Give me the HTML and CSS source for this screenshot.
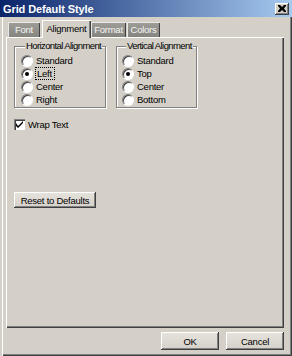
FILE: index.html
```html
<!DOCTYPE html>
<html lang="en">
<head>
  <meta charset="UTF-8">
  <title>Grid Default Style</title>
  <link rel="stylesheet" href="styles.css">
</head>
<body>

<div class="window">
  <div class="titlebar">
    <span class="title">Grid Default Style</span>
    <span class="close">
      <svg width="8" height="7" viewBox="0 0 8 7">
        <path d="M0 0h2l2 2 2-2h2v1l-2 2.5 2 2.5v1h-2l-2-2-2 2h-2v-1l2-2.5-2-2.5z" fill="#000"/>
      </svg>
    </span>
  </div>

  <div class="client">
    <div class="tabs">
      <span class="tab tab-font">Font</span>
      <span class="tab active">Alignment</span>
      <span class="tab tab-format">Format</span>
      <span class="tab tab-colors">Colors</span>
    </div>

    <div class="panel">
      <div class="groups">
        <fieldset class="group horiz">
          <legend>Horizontal Alignment</legend>
          <label class="opt"><span class="radio"></span><span>Standard</span></label>
          <label class="opt"><span class="radio checked"></span><span class="focus">Left</span></label>
          <label class="opt"><span class="radio"></span><span>Center</span></label>
          <label class="opt"><span class="radio"></span><span>Right</span></label>
        </fieldset>
        <fieldset class="group vert">
          <legend>Vertical Alignment</legend>
          <label class="opt"><span class="radio"></span><span>Standard</span></label>
          <label class="opt"><span class="radio checked"></span><span>Top</span></label>
          <label class="opt"><span class="radio"></span><span>Center</span></label>
          <label class="opt"><span class="radio"></span><span>Bottom</span></label>
        </fieldset>
      </div>

      <label class="check">
        <span class="box">
          <svg width="7" height="7" viewBox="0 0 7 7">
            <path d="M0 2v3l2 2 5-5v-2l-5 5z" fill="#000"/>
          </svg>
        </span>
        <span>Wrap Text</span>
      </label>

      <button class="btn reset" type="button">Reset to Defaults</button>
    </div>

    <div class="actions">
      <button class="btn" type="button">OK</button>
      <button class="btn" type="button">Cancel</button>
    </div>
  </div>
</div>

</body>
</html>
```

FILE: styles.css
```css
body {
  margin: 0;
  font-family: "Liberation Sans", Arial, sans-serif;
  font-size: 9.5px;
  letter-spacing: -0.25px;
  color: #000;
  background-color: #d4d0c8;
}
.window {
  width: 292px;
  height: 356px;
  display: flex;
  flex-direction: column;
  background-color: #d4d0c8;
}
.titlebar {
  height: 17px;
  display: flex;
  align-items: center;
  justify-content: space-between;
  padding: 0 3px 0 3px;
  background: linear-gradient(to right, #0a246a, #a6caf0);
}
.title {
  color: #fff;
  font-weight: bold;
  font-size: 11px;
  letter-spacing: -0.1px;
}
.close {
  width: 14px;
  height: 12px;
  display: flex;
  align-items: center;
  justify-content: center;
  background-color: #d4d0c8;
  box-shadow: inset -1px -1px #404040, inset 1px 1px #fff, inset -2px -2px #808080;
}
.client {
  flex: 1;
  display: flex;
  flex-direction: column;
  padding: 3px 8px 0 6px;
  box-shadow: inset 2px 0 #d4d0c8, inset 3px 0 #fff,
              inset -1px -1px #404040, inset -2px -2px #808080;
}
.tabs {
  display: flex;
  align-items: flex-end;
  height: 17px;
  padding-left: 2px;
}
.tab {
  height: 15px;
  line-height: 15px;
  text-align: center;
  margin-right: 1px;
  color: #f4f4f4;
  background: linear-gradient(#a09e98, #86847f);
  box-shadow: inset 1px 1px #e8e8e8, inset -1px 0 #404040;
}
.tab-font {
  width: 32px;
}
.tab-format {
  width: 35px;
}
.tab-colors {
  width: 33px;
}
.tab.active {
  width: 49px;
  height: 18px;
  line-height: 17px;
  margin: 0 0 -1px 1px;
  color: #000;
  background: #d4d0c8;
  box-shadow: inset 1px 1px #fff, inset -1px 0 #404040, inset -2px 0 #808080;
  position: relative;
}
.panel {
  height: 288px;
  padding: 3px 8px 0 8px;
  box-shadow: inset 1px 1px #fff, inset -1px -1px #404040, inset -2px -2px #808080;
}
.groups {
  display: flex;
  gap: 10px;
}
.group {
  margin: 0;
  padding: 2px 0 1px 6px;
  border: 1px solid #808080;
  box-shadow: inset 1px 1px #fff, 1px 1px #fff;
  min-width: 0;
}
.group legend {
  padding: 0 1px;
  margin-left: 4px;
  line-height: 12px;
  white-space: nowrap;
  letter-spacing: -0.6px;
  background: #d4d0c8;
}
.horiz {
  width: 84px;
}
.vert {
  width: 74px;
  padding-left: 5px;
}
.opt {
  display: flex;
  align-items: center;
  height: 13px;
  gap: 3px;
}
.radio {
  width: 10px;
  height: 10px;
  border-radius: 50%;
  background: #fff;
  border: 1px solid;
  border-color: #808080 #fff #fff #808080;
  box-shadow: inset 1px 1px #404040;
  display: flex;
  align-items: center;
  justify-content: center;
}
.radio.checked::after {
  content: "";
  width: 4px;
  height: 4px;
  border-radius: 50%;
  background: #000;
}
.focus {
  outline: 1px dotted #000;
  outline-offset: 0;
  padding: 0 2px 0 1px;
}
.check {
  display: flex;
  align-items: center;
  gap: 3px;
  margin-top: 10px;
  height: 13px;
}
.box {
  width: 11px;
  height: 11px;
  display: flex;
  align-items: center;
  justify-content: center;
  background: #fff;
  box-shadow: inset 1px 1px #808080, inset 2px 2px #404040, inset -1px -1px #fff;
}
.btn {
  font-family: "Liberation Sans", Arial, sans-serif;
  font-size: 9.5px;
  letter-spacing: -0.25px;
  color: #000;
  background: linear-gradient(#e6e3dd, #d4d0c8);
  border: none;
  padding: 0;
  box-shadow: inset -1px -1px #404040, inset 1px 1px #fff, inset -2px -2px #808080;
}
.reset {
  display: block;
  margin-top: 61px;
  width: 82px;
  height: 16px;
}
.actions {
  display: flex;
  justify-content: flex-end;
  gap: 7px;
  padding-top: 4px;
}
.actions .btn {
  width: 58px;
  height: 18px;
}
```
